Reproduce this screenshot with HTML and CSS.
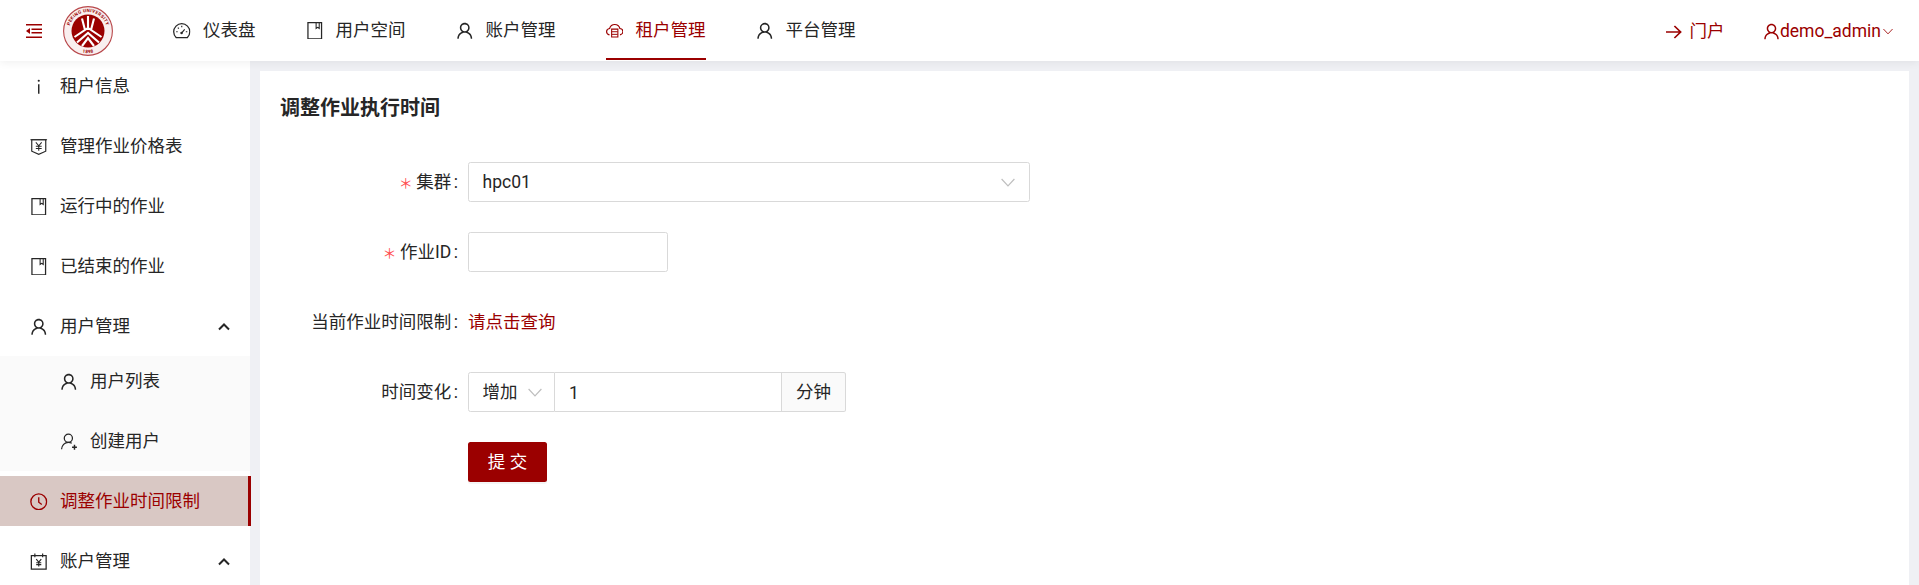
FILE: index.html
```html
<!DOCTYPE html>
<html lang="zh-CN">
<head>
    <meta charset="UTF-8">
    <title>调整作业执行时间</title>
    <link rel="stylesheet" href="styles.css">
</head>
<body>

<svg class="sprites" aria-hidden="true">
    <symbol id="i-user" viewBox="70 70 884 884">
        <path fill="currentColor" d="M858.5 763.6a374 374 0 0 0-80.6-119.5 375.63 375.63 0 0 0-119.5-80.6c-.4-.2-.8-.3-1.2-.5C719.5 518 760 444.7 760 362c0-137-111-248-248-248S264 225 264 362c0 82.7 40.5 156 102.8 201.1-.4.2-.8.3-1.2.5-44.8 18.9-85 46-119.5 80.6a375.63 375.63 0 0 0-80.6 119.5A371.7 371.7 0 0 0 136 901.8a8 8 0 0 0 8 8.2h60c4.4 0 7.9-3.5 8-7.8 2-77.2 33-149.5 87.8-204.3 56.7-56.7 132-87.9 212.2-87.9s155.5 31.2 212.2 87.9C779 752.7 810 825 812 902.2c.1 4.4 3.6 7.8 8 7.8h60a8 8 0 0 0 8-8.2c-1-47.8-10.9-94.3-29.5-138.2zM512 534c-45.9 0-89.1-17.9-121.6-50.4S340 407.9 340 362c0-45.9 17.9-89.1 50.4-121.6S466.1 190 512 190s89.1 17.9 121.6 50.4S684 316.1 684 362c0 45.9-17.9 89.1-50.4 121.6S557.9 534 512 534z"/>
    </symbol>
    <symbol id="i-user-add" viewBox="0 0 18 18">
        <circle cx="8.6" cy="5.4" r="4.2" fill="none" stroke="currentColor" stroke-width="1.3"/>
        <path d="M1.6 16.800c.1-4 3.200-7.200 7-7.200 1.300 0 2.500.3 3.500 1" fill="none" stroke="currentColor" stroke-width="1.3"/>
        <path d="M12.400 14.700h5M14.900 12.200v5" fill="none" stroke="currentColor" stroke-width="1.5"/>
    </symbol>
    <symbol id="i-book" viewBox="0 0 18 18">
        <path d="M2 .7h14v16.600H2z" fill="none" stroke="currentColor" stroke-width="1.3"/>
        <path d="M10.400 1v5.600l1.600-1.100 1.600 1.100V1" fill="none" stroke="currentColor" stroke-width="1.1"/>
    </symbol>
    <symbol id="i-dash" viewBox="0 0 18 18">
        <path d="M3.200 16h11.600a8.300 8.300 0 1 0-11.600 0z" fill="none" stroke="currentColor" stroke-width="1.3"/>
        <path d="M9 11.200l3-3.600M3.300 10h1.500M13.200 10h1.500M5 5.800l1 1M9 3.900v1.500" fill="none" stroke="currentColor" stroke-width="1.2"/>
        <circle cx="8.800" cy="11.400" r="1.3" fill="currentColor"/>
    </symbol>
    <symbol id="i-cloud" viewBox="0 0 18 14">
        <path d="M3.600 11.200C1.800 10.700.6 9.400.6 7.900c0-1.800 1.400-3 3.100-3.200C4.400 2.200 6.500.6 9 .6s4.600 1.600 5.300 4.100c1.700.2 3.100 1.400 3.100 3.200 0 1.500-1.200 2.800-3 3.300" fill="none" stroke="currentColor" stroke-width="1.2"/>
        <path d="M5.800 5.300h6.400v8.100H5.800z" fill="none" stroke="currentColor" stroke-width="1.1"/>
        <path d="M6 8h6M6 10.700h6" fill="none" stroke="currentColor" stroke-width="1"/>
    </symbol>
    <symbol id="i-info" viewBox="0 0 18 18">
        <circle cx="9" cy="2.800" r="1.1" fill="currentColor"/>
        <path d="M9 6.500v9.800" fill="none" stroke="currentColor" stroke-width="1.5"/>
    </symbol>
    <symbol id="i-money" viewBox="0 0 18 18">
        <path d="M1.800 1.800h14.400v11.800L9 16.800l-7.200-3.200z" fill="none" stroke="currentColor" stroke-width="1.2"/>
        <path d="M.4 1.800h17.200M6 4.600L9 8l3-3.400M6 8.400h6M6 10.800h6M9 8v5" fill="none" stroke="currentColor" stroke-width="1.1"/>
    </symbol>
    <symbol id="i-account" viewBox="0 0 18 18">
        <path d="M1.400 2.800h15.200v13.900H1.400z" fill="none" stroke="currentColor" stroke-width="1.3"/>
        <path d="M5 .6v3.800M13 .6v3.800M6.400 6.400L9 9.400l2.600-3M6.400 10h5.200M6.400 12h5.200M9 9.400v4.400" fill="none" stroke="currentColor" stroke-width="1.2"/>
    </symbol>
    <symbol id="i-clock" viewBox="0 0 18 18">
        <circle cx="9" cy="9" r="8.100" fill="none" stroke="currentColor" stroke-width="1.4"/>
        <path d="M9 4.400v5.100l3.100 2.300" fill="none" stroke="currentColor" stroke-width="1.4"/>
    </symbol>
    <symbol id="i-up" viewBox="0 0 12 8">
        <path d="M1 6.500l5-5 5 5" fill="none" stroke="currentColor" stroke-width="2"/>
    </symbol>
    <symbol id="i-down" viewBox="0 0 14 9">
        <path d="M.6 1l6.400 6.800L13.400 1" fill="none" stroke="currentColor" stroke-width="1.2"/>
    </symbol>
    <symbol id="i-arrow" viewBox="0 0 16 14">
        <path d="M0 7h14.600M8.400 1l6.200 6-6.200 6" fill="none" stroke="currentColor" stroke-width="1.7"/>
    </symbol>
</svg>

<div class="header">
    <svg class="fold" viewBox="0 0 16 14">
        <path d="M0 .7h16M5.500 5.200H16M5.500 8.800H16M0 13.300h16" fill="none" stroke="currentColor" stroke-width="1.4"/>
        <path d="M0 7l4-3v6z" fill="currentColor"/>
    </svg>
    <svg class="logo" viewBox="0 0 50 50">
        <defs>
            <path id="ring-top" d="M6 25a19 19 0 0 1 38 0"/>
            <path id="ring-bottom" d="M2.800 25a22.200 22.200 0 0 0 44.400 0"/>
        </defs>
        <circle cx="25" cy="25" r="24.400" fill="#f9efef" stroke="#b8474a" stroke-width="1.1"/>
        <text class="logo-text"><textPath href="#ring-top" startOffset="50%" text-anchor="middle">PEKING UNIVERSITY</textPath></text>
        <text class="logo-text"><textPath href="#ring-bottom" startOffset="50%" text-anchor="middle">1898</textPath></text>
        <circle cx="25" cy="25" r="16.500" fill="#9b0000"/>
        <path d="M25 10v14M19 12.500l3 11.500M31 12.500l-3 11.500M11.500 31L25 22l13.500 9M14 36.500L25 27l11 9.500M19 40L25 32l6 8" fill="none" stroke="#fff" stroke-width="2.1"/>
    </svg>
    <div class="nav">
        <a class="nav-item"><svg class="ic"><use href="#i-dash"/></svg>仪表盘</a>
        <a class="nav-item"><svg class="ic"><use href="#i-book"/></svg>用户空间</a>
        <a class="nav-item"><svg class="ic"><use href="#i-user"/></svg>账户管理</a>
        <a class="nav-item active"><svg class="ic"><use href="#i-cloud"/></svg>租户管理</a>
        <a class="nav-item"><svg class="ic"><use href="#i-user"/></svg>平台管理</a>
    </div>
    <div class="right">
        <a class="portal"><svg class="arrow"><use href="#i-arrow"/></svg>门户</a>
        <a class="account"><svg class="ic-user"><use href="#i-user"/></svg>demo_admin<svg class="caret"><use href="#i-down"/></svg></a>
    </div>
</div>

<div class="body">
    <div class="sidebar">
        <div class="menu-item"><svg class="ic"><use href="#i-info"/></svg>租户信息</div>
        <div class="menu-item"><svg class="ic"><use href="#i-money"/></svg>管理作业价格表</div>
        <div class="menu-item"><svg class="ic"><use href="#i-book"/></svg>运行中的作业</div>
        <div class="menu-item"><svg class="ic"><use href="#i-book"/></svg>已结束的作业</div>
        <div class="menu-item"><svg class="ic"><use href="#i-user"/></svg>用户管理<svg class="up"><use href="#i-up"/></svg></div>
        <div class="submenu">
            <div class="menu-item sub"><svg class="ic"><use href="#i-user"/></svg>用户列表</div>
            <div class="menu-item sub"><svg class="ic"><use href="#i-user-add"/></svg>创建用户</div>
        </div>
        <div class="menu-item selected"><svg class="ic"><use href="#i-clock"/></svg>调整作业时间限制</div>
        <div class="menu-item"><svg class="ic"><use href="#i-account"/></svg>账户管理<svg class="up"><use href="#i-up"/></svg></div>
    </div>

    <div class="main">
        <div class="card">
            <h1 class="title">调整作业执行时间</h1>

            <div class="row">
                <label class="label"><span class="req">＊</span>集群</label>
                <div class="select wide">hpc01<svg class="chev"><use href="#i-down"/></svg></div>
            </div>

            <div class="row">
                <label class="label"><span class="req">＊</span>作业ID</label>
                <input class="input short" type="text">
            </div>

            <div class="row">
                <label class="label">当前作业时间限制</label>
                <a class="query">请点击查询</a>
            </div>

            <div class="row">
                <label class="label">时间变化</label>
                <div class="group">
                    <div class="select small">增加<svg class="chev"><use href="#i-down"/></svg></div>
                    <input class="input grow" type="text" value="1">
                    <div class="addon">分钟</div>
                </div>
            </div>

            <div class="row">
                <span class="spacer"></span>
                <button type="button" class="submit">提 交</button>
            </div>
        </div>
    </div>
</div>

</body>
</html>
```

FILE: styles.css
```css
* {
  box-sizing: border-box;
}

html, body {
  margin: 0;
  height: 100%;
  overflow: hidden;
}

body {
  display: flex;
  flex-direction: column;
  background: #eff0f4;
  color: #262626;
  font-family: Roboto, "Noto Sans CJK SC", sans-serif;
  font-size: 17.5px;
  line-height: 1.5;
}

.sprites {
  display: none;
}

.ic {
  width: 17.5px;
  height: 17.5px;
  margin-right: 12.5px;
  flex-shrink: 0;
}

/* top bar */
.header {
  position: relative;
  z-index: 2;
  display: flex;
  align-items: center;
  height: 61px;
  flex-shrink: 0;
  padding: 0 26px;
  background: #fff;
  box-shadow: 0 2px 8px rgba(0, 0, 0, 0.06);
}

.fold {
  width: 16px;
  height: 14px;
  color: #9b0000;
  margin-right: 21px;
}

.logo {
  width: 50px;
  height: 50px;
  margin-right: 35px;
}

.logo-text {
  font-size: 4.6px;
  font-weight: 700;
  fill: #9b0000;
  letter-spacing: 0.3px;
}

.nav {
  display: flex;
  height: 100%;
}

.nav-item {
  display: flex;
  align-items: center;
  margin: 0 25px;
  padding-top: 3px;
  height: 60px;
  border-bottom: 2px solid transparent;
}

.nav-item.active {
  color: #9b0000;
  border-bottom-color: #9b0000;
}

.right {
  display: flex;
  align-items: center;
  margin-left: auto;
  padding-top: 2px;
  color: #9b0000;
}

.portal, .account {
  display: flex;
  align-items: center;
}

.arrow {
  width: 16px;
  height: 14px;
  margin-right: 7px;
}

.account {
  margin-left: 38.5px;
}

.ic-user {
  width: 17px;
  height: 17px;
}

.caret {
  width: 10px;
  height: 7px;
  margin-left: 2px;
}

/* sidebar */
.body {
  display: flex;
  flex: 1;
  min-height: 0;
}

.sidebar {
  width: 250px;
  flex-shrink: 0;
  background: #fff;
}

.menu-item {
  display: flex;
  align-items: center;
  height: 50px;
  margin-bottom: 10px;
  padding-top: 1px;
  padding-left: 30px;
  padding-right: 20px;
}

.up {
  width: 12px;
  height: 8px;
  margin-left: auto;
}

.submenu {
  margin-top: -5px;
  margin-bottom: 5px;
  padding-bottom: 5px;
  background: #fafafa;
}

.menu-item.sub {
  padding-left: 60px;
}

.menu-item.sub:last-child {
  margin-bottom: 0;
}

.menu-item.selected {
  width: 251px;
  background: #d9c8c4;
  color: #9b0000;
  border-right: 3px solid #9b0000;
}

/* form */
.main {
  flex: 1;
  min-width: 0;
  padding: 10px 10px 0;
}

.card {
  height: 100%;
  padding: 23px 20px 0;
  background: #fff;
}

.title {
  margin: 0 0 40px;
  font-size: 20px;
  font-weight: 700;
  line-height: 28px;
}

.row {
  display: flex;
  align-items: center;
  height: 40px;
  margin-bottom: 30px;
}

.label {
  width: 178px;
  margin-right: 10px;
  padding-top: 1px;
  flex-shrink: 0;
  text-align: right;
}

.label::after {
  content: ":";
  margin-left: 2.5px;
}

.spacer {
  width: 188px;
  flex-shrink: 0;
}

.req {
  margin-right: 3.5px;
  color: #ff4d4f;
  font-family: "Noto Sans CJK SC", sans-serif;
  font-size: 14px;
  font-weight: 400;
}

.select, .input, .addon {
  height: 40px;
  border: 1px solid #d9d9d9;
  background: #fff;
  font: inherit;
  color: inherit;
}

.select {
  display: flex;
  align-items: center;
  justify-content: space-between;
  padding: 1px 14px 0 13.5px;
  border-radius: 2.5px;
}

.wide {
  width: 562px;
}

.chev {
  width: 14px;
  height: 9px;
  color: #bfbfbf;
}

.input {
  padding: 1px 14px 0;
  border-radius: 2.5px;
  outline: none;
}

.short {
  width: 200px;
}

.query {
  padding-top: 1px;
  color: #9b0000;
}

.group {
  display: flex;
  width: 378px;
}

.small {
  width: 87px;
  border-radius: 2.5px 0 0 2.5px;
  padding-right: 12px;
}

.grow {
  flex: 1;
  min-width: 0;
  border-left: 0;
  border-radius: 0;
}

.addon {
  display: flex;
  align-items: center;
  justify-content: center;
  width: 64px;
  padding-top: 1px;
  border-left: 0;
  border-radius: 0 2.5px 2.5px 0;
  background: #fafafa;
}

.submit {
  width: 79px;
  height: 40px;
  border: 0;
  border-radius: 2.5px;
  background: #9b0000;
  color: #fff;
  font: inherit;
  box-shadow: 0 2px 0 rgba(0, 0, 0, 0.045);
}
```
